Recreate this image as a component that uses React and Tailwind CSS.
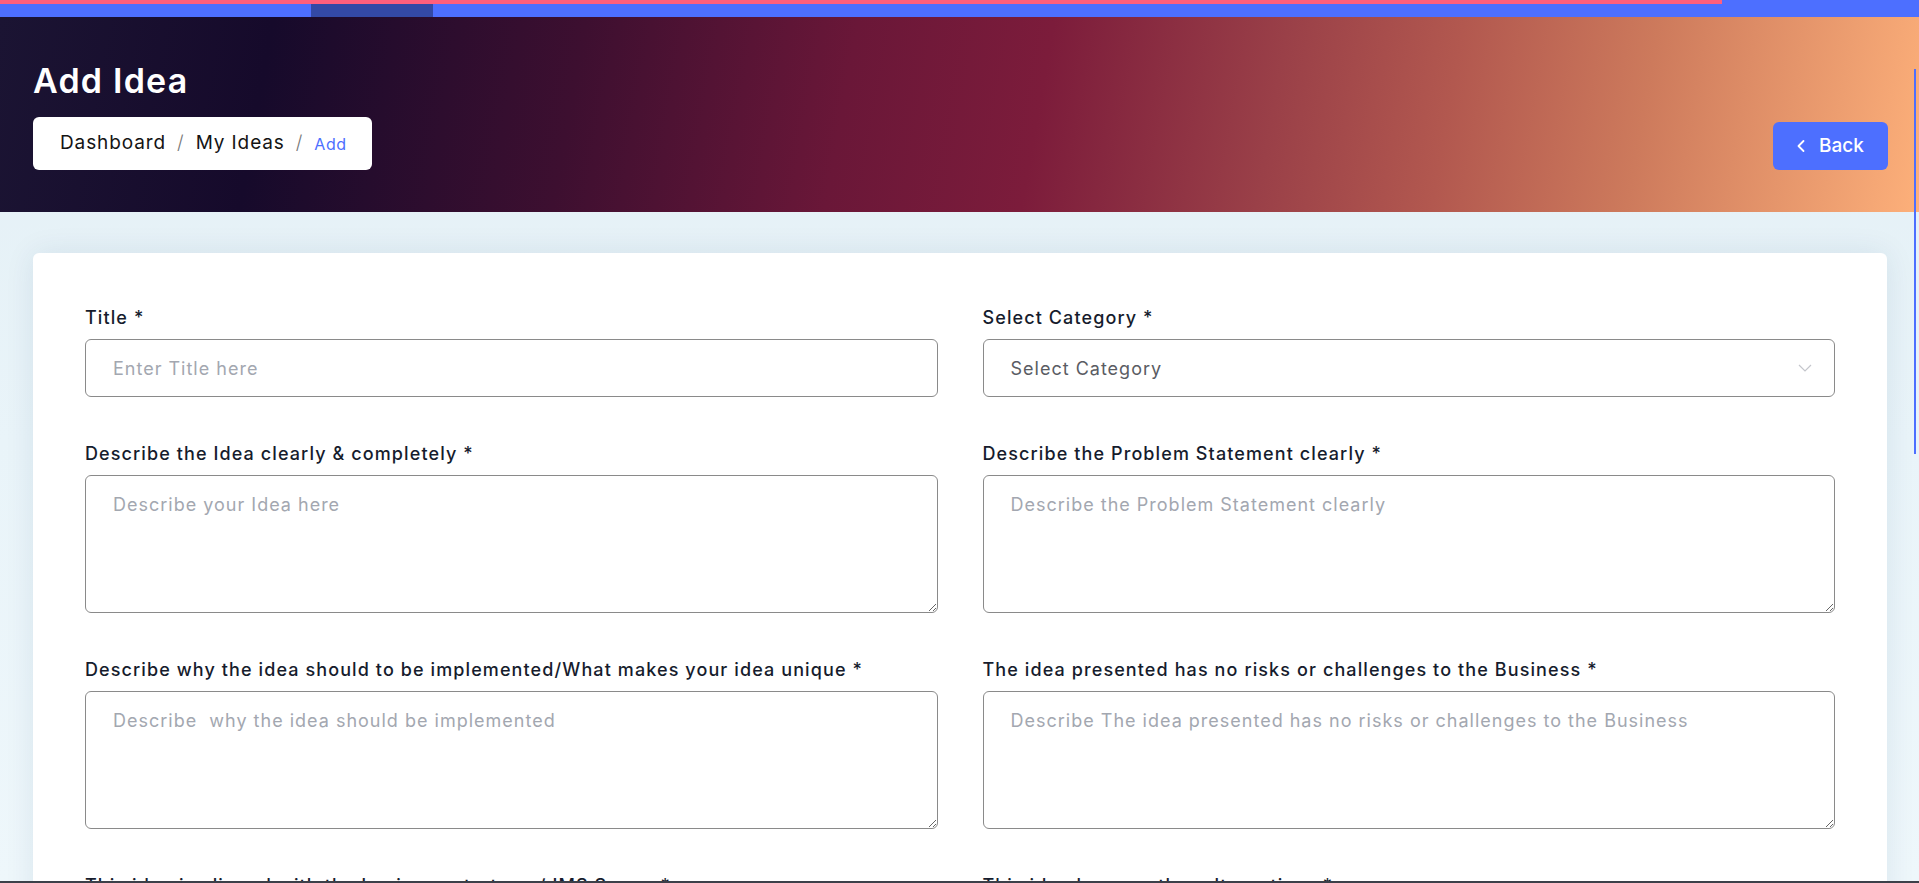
import { ChevronLeft } from 'lucide-react';

const FIELDS = [
  { label: 'Title *', placeholder: 'Enter Title here', kind: 'input' },
  { label: 'Select Category *', placeholder: 'Select Category', kind: 'select' },
  { label: 'Describe the Idea clearly & completely *', placeholder: 'Describe your Idea here', kind: 'area' },
  { label: 'Describe the Problem Statement clearly *', placeholder: 'Describe the Problem Statement clearly', kind: 'area' },
  {
    label: 'Describe why the idea should to be implemented/What makes your idea unique *',
    placeholder: 'Describe  why the idea should be implemented',
    kind: 'area',
  },
  {
    label: 'The idea presented has no risks or challenges to the Business *',
    placeholder: 'Describe The idea presented has no risks or challenges to the Business',
    kind: 'area',
  },
  { label: 'This idea is aligned with the business strategy / IMS Scope *', placeholder: '', kind: 'area' },
  { label: 'This idea has no other alternatives *', placeholder: '', kind: 'area' },
];

function Field({ field }) {
  const box =
    'w-full rounded-[6px] border border-[#8a8a8a] bg-white px-[27px] text-[18px] tracking-[1px] text-[#333] outline-none placeholder:text-[#a3a7b0]';
  return (
    <div className="flex flex-col">
      <label className="mb-[9px] h-[24px] whitespace-nowrap text-[18px] font-medium leading-[24px] tracking-[1.1px] text-[#161c2d]">
        {field.label}
      </label>
      {field.kind === 'input' && <input className={`${box} h-[58px]`} placeholder={field.placeholder} />}
      {field.kind === 'select' && (
        <div className={`${box} flex h-[58px] items-center justify-between pr-[22px]`}>
          <span className="text-[#5a5c63]">{field.placeholder}</span>
          <svg width="14" height="8" viewBox="0 0 14 8" fill="none">
            <path d="M1 1l6 6 6-6" stroke="#c4c6cc" strokeWidth="1.2" />
          </svg>
        </div>
      )}
      {field.kind === 'area' && (
        <textarea className={`${box} h-[138px] pt-[17px] leading-[24px]`} placeholder={field.placeholder} />
      )}
    </div>
  );
}

export default function App() {
  return (
    <div className="relative h-screen overflow-hidden bg-[linear-gradient(180deg,#e3eff5_0%,#e9f4f9_50%,#eef7fb_100%)] font-['Inter',sans-serif]">
      {/* progress strip */}
      <div className="flex h-[4px]">
        <div className="w-[1722px] bg-[#ff5f7d]" />
        <div className="flex-1 bg-[#4d6fff]" />
      </div>
      <div className="flex h-[13px] bg-[#4d6fff]">
        <div className="ml-[311px] w-[122px] bg-[#3349a6]" />
      </div>

      <header className="flex h-[195px] items-end justify-between bg-[linear-gradient(100deg,#1b1433_0%,#160a2b_14%,#3d0f30_30%,#6a1738_44%,#7c1c3b_54%,#9a4048_66%,#b2584f_75%,#cd7a5c_85%,#fdb07a_100%)] pb-[42px] pl-[33px] pr-[31px]">
        <div className="flex flex-col">
          <h1 className="text-[34px] font-semibold leading-[41px] tracking-[1.2px] text-white">Add Idea</h1>
          <nav className="mt-[16px] flex h-[53px] w-[339px] items-center whitespace-nowrap rounded-[6px] bg-white px-[27px] text-[19px] tracking-[0.9px]">
            <span className="shrink-0 text-[#141414]">Dashboard</span>
            <span className="mx-[11px] shrink-0 font-light text-[#777]">/</span>
            <span className="shrink-0 text-[#141414]">My Ideas</span>
            <span className="mx-[11px] shrink-0 font-light text-[#777]">/</span>
            <span className="shrink-0 text-[16px] tracking-[0.6px] text-[#4d6fff]">Add</span>
          </nav>
        </div>
        <button className="flex h-[48px] w-[115px] items-center justify-center gap-[8px] rounded-[6px] bg-[#4d6fff] text-[19px] font-medium text-white">
          <ChevronLeft size={20} strokeWidth={2.2} className="-ml-[6px]" />
          Back
        </button>
      </header>

      <main className="pl-[33px] pr-[32px] pt-[41px]">
        <div className="rounded-[6px] bg-white px-[52px] pb-[60px] pt-[53px] shadow-[0_0_30px_rgba(20,60,100,0.09)]">
          <div className="grid grid-cols-2 gap-x-[45px] gap-y-[45px]">
            {FIELDS.map((f) => (
              <Field key={f.label} field={f} />
            ))}
          </div>
        </div>
      </main>

      {/* scroll thumb + bottom edge */}
      <div className="absolute right-[3px] top-[69px] h-[385px] w-[2px] bg-[#4d6fff]" />
      <div className="absolute bottom-0 left-0 h-[2px] w-full bg-[#3c4049]" />
    </div>
  );
}
